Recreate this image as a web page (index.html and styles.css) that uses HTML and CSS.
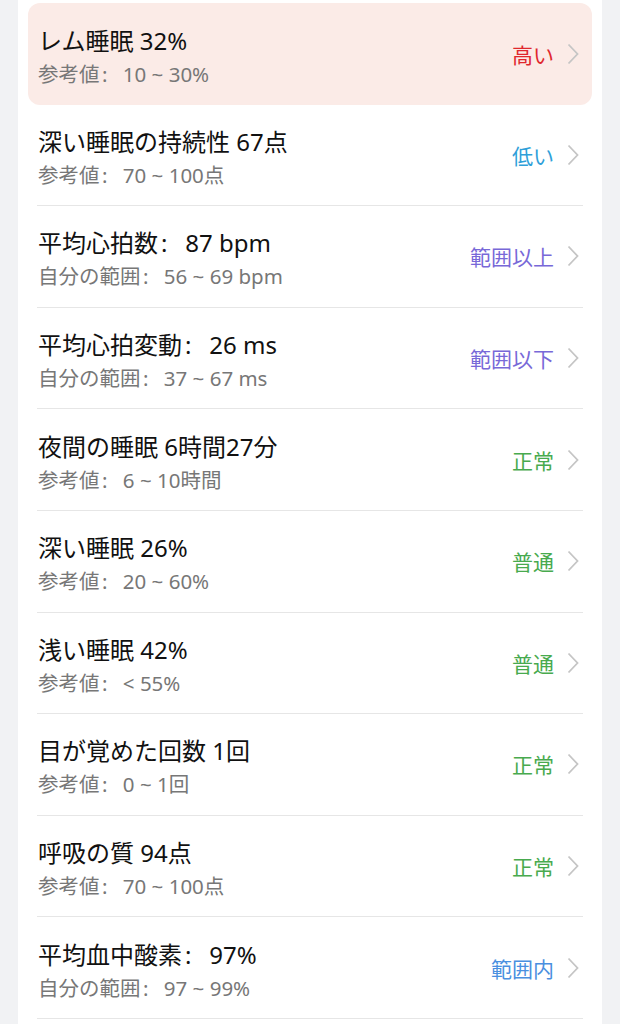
FILE: index.html
```html
<!DOCTYPE html>
<html lang="ja">

<head>
  <meta charset="UTF-8">
  <title>睡眠の詳細</title>
  <link rel="stylesheet" href="styles.css">
</head>

<body>
  <div class="page">
    <div class="card">
      <div class="row active">
        <div class="text">
          <div class="title">レム睡眠 32%</div>
          <div class="sub">参考値<span class="colon">:</span>10 ~ 30%</div>
        </div>
        <span class="status high">高い</span>
        <svg class="chevron" viewBox="0 0 12 22"><polyline points="1.5,1.5 10.5,11 1.5,20.5" /></svg>
      </div>
      <div class="row">
        <div class="text">
          <div class="title">深い睡眠の持続性 67点</div>
          <div class="sub">参考値<span class="colon">:</span>70 ~ 100点</div>
        </div>
        <span class="status low">低い</span>
        <svg class="chevron" viewBox="0 0 12 22"><polyline points="1.5,1.5 10.5,11 1.5,20.5" /></svg>
      </div>
      <div class="row">
        <div class="text">
          <div class="title">平均心拍数<span class="colon">:</span>87 bpm</div>
          <div class="sub">自分の範囲<span class="colon">:</span>56 ~ 69 bpm</div>
        </div>
        <span class="status range">範囲以上</span>
        <svg class="chevron" viewBox="0 0 12 22"><polyline points="1.5,1.5 10.5,11 1.5,20.5" /></svg>
      </div>
      <div class="row">
        <div class="text">
          <div class="title">平均心拍変動<span class="colon">:</span>26 ms</div>
          <div class="sub">自分の範囲<span class="colon">:</span>37 ~ 67 ms</div>
        </div>
        <span class="status range">範囲以下</span>
        <svg class="chevron" viewBox="0 0 12 22"><polyline points="1.5,1.5 10.5,11 1.5,20.5" /></svg>
      </div>
      <div class="row">
        <div class="text">
          <div class="title">夜間の睡眠 6時間27分</div>
          <div class="sub">参考値<span class="colon">:</span>6 ~ 10時間</div>
        </div>
        <span class="status ok">正常</span>
        <svg class="chevron" viewBox="0 0 12 22"><polyline points="1.5,1.5 10.5,11 1.5,20.5" /></svg>
      </div>
      <div class="row">
        <div class="text">
          <div class="title">深い睡眠 26%</div>
          <div class="sub">参考値<span class="colon">:</span>20 ~ 60%</div>
        </div>
        <span class="status ok">普通</span>
        <svg class="chevron" viewBox="0 0 12 22"><polyline points="1.5,1.5 10.5,11 1.5,20.5" /></svg>
      </div>
      <div class="row">
        <div class="text">
          <div class="title">浅い睡眠 42%</div>
          <div class="sub">参考値<span class="colon">:</span>&lt; 55%</div>
        </div>
        <span class="status ok">普通</span>
        <svg class="chevron" viewBox="0 0 12 22"><polyline points="1.5,1.5 10.5,11 1.5,20.5" /></svg>
      </div>
      <div class="row">
        <div class="text">
          <div class="title">目が覚めた回数 1回</div>
          <div class="sub">参考値<span class="colon">:</span>0 ~ 1回</div>
        </div>
        <span class="status ok">正常</span>
        <svg class="chevron" viewBox="0 0 12 22"><polyline points="1.5,1.5 10.5,11 1.5,20.5" /></svg>
      </div>
      <div class="row">
        <div class="text">
          <div class="title">呼吸の質 94点</div>
          <div class="sub">参考値<span class="colon">:</span>70 ~ 100点</div>
        </div>
        <span class="status ok">正常</span>
        <svg class="chevron" viewBox="0 0 12 22"><polyline points="1.5,1.5 10.5,11 1.5,20.5" /></svg>
      </div>
      <div class="row">
        <div class="text">
          <div class="title">平均血中酸素<span class="colon">:</span>97%</div>
          <div class="sub">自分の範囲<span class="colon">:</span>97 ~ 99%</div>
        </div>
        <span class="status inside">範囲内</span>
        <svg class="chevron" viewBox="0 0 12 22"><polyline points="1.5,1.5 10.5,11 1.5,20.5" /></svg>
      </div>
    </div>
  </div>
</body>

</html>
```

FILE: styles.css
```css
body {
  margin: 0;
  background: #f1f2f4;
  font-family: "Noto Sans", "Noto Sans CJK JP", sans-serif;
  overflow: hidden;
}

.page {
  padding: 0 18px;
}

.card {
  background: #fff;
  padding: 3px 19px 0 19px;
  min-height: 1030px;
}

.row {
  display: flex;
  align-items: center;
  height: 101.6px;
  box-sizing: border-box;
  border-bottom: 1px solid #e6e6e6;
}

.row.active {
  margin: 0 -9px;
  padding: 0 9px;
  background: #fbebe7;
  border-radius: 12px;
  border-bottom: none;
}

.text {
  flex: 1;
  padding-left: 1px;
  padding-top: 5px;
}

.title {
  font-size: 24px;
  color: #111;
  line-height: 32px;
}

.sub {
  margin-top: 3px;
  font-size: 20.5px;
  color: #777;
  line-height: 28px;
}

/* half-width colon hugging the label, with room after it */
.colon {
  margin: 0 0.75em 0 0.12em;
}

.status {
  font-size: 21px;
}

.status.high {
  color: #e0272d;
}

.status.low {
  color: #2f9fd9;
}

.status.range {
  color: #7868d8;
}

.status.ok {
  color: #48aa4e;
}

.status.inside {
  color: #4a8fe0;
}

.chevron {
  width: 12px;
  height: 22px;
  margin: 0 4px 0 13px;
  fill: none;
  stroke: #c5c5c5;
  stroke-width: 1.8;
}
```
